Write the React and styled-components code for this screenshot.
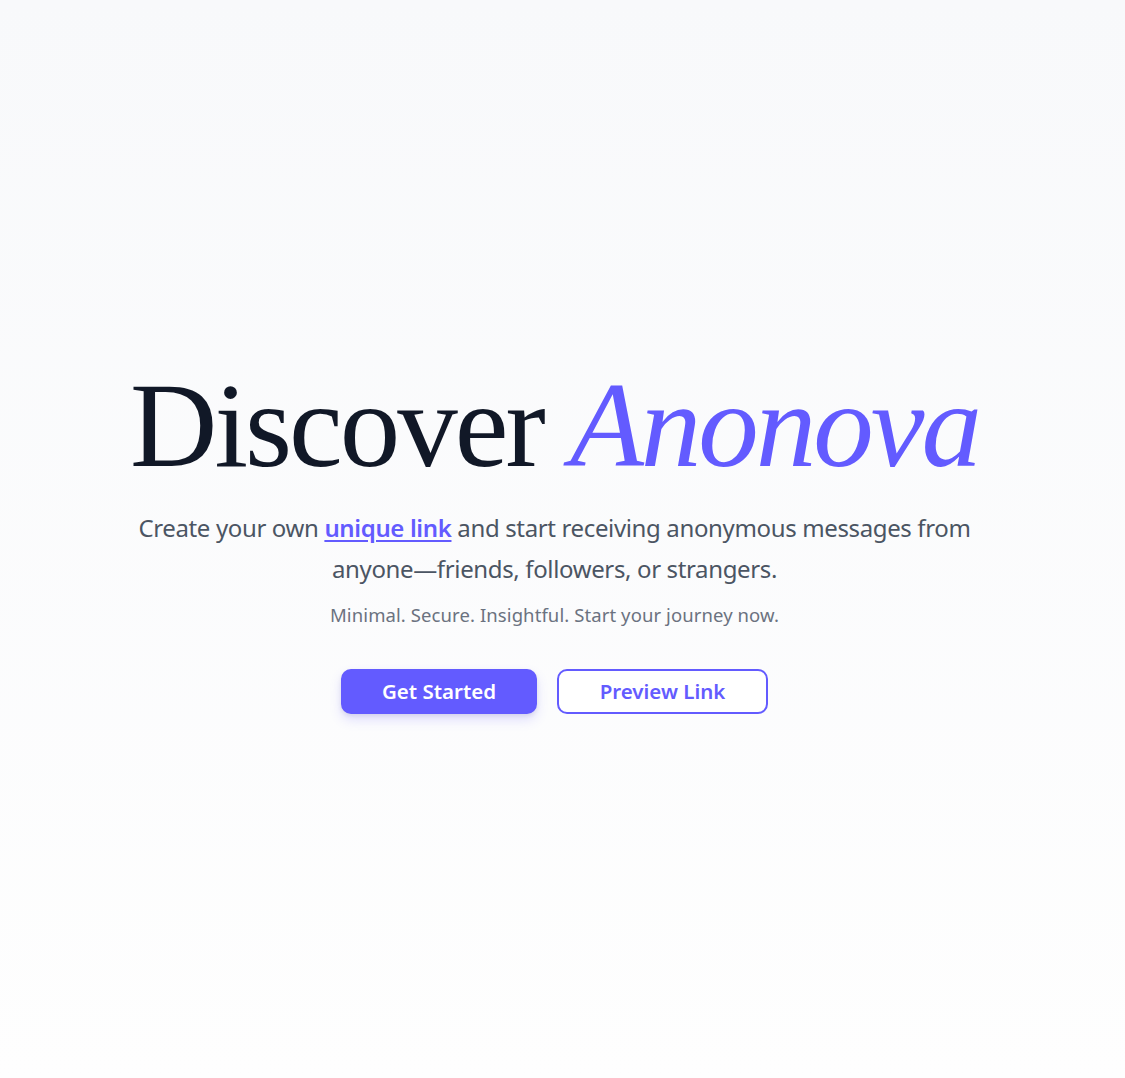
import React from "react";
import styled, { createGlobalStyle } from "styled-components";

const GlobalStyle = createGlobalStyle`
  * { box-sizing: border-box; }
  body {
    margin: 0;
    font-family: "Noto Sans", "Liberation Sans", sans-serif;
    background: #ffffff;
  }
`;

const Page = styled.main`
  min-height: 100vh;
  display: flex;
  flex-direction: column;
  align-items: center;
  justify-content: center;
  text-align: center;
  padding: 0 40px 0 24px;
  background: linear-gradient(180deg, #f8f9fb 0%, #fefefe 100%);
`;

const Heading = styled.h1`
  margin: 0;
  font-family: "Liberation Serif", "Times New Roman", serif;
  font-weight: 400;
  font-size: 121px;
  line-height: 1;
  letter-spacing: -0.025em;
  color: #111827;

  em {
    font-style: italic;
    color: #635bff;
  }
`;

const Lead = styled.p`
  margin: 21px 0 0;
  max-width: 880px;
  font-size: 24px;
  line-height: 41px;
  color: #4b5563;
  letter-spacing: -0.015em;

  a {
    color: #635bff;
    font-weight: 600;
    text-decoration: underline;
    text-underline-offset: 3px;
  }
`;

const Tagline = styled.p`
  margin: 12px 0 0;
  font-size: 18.5px;
  line-height: 28px;
  color: #6b7280;
  letter-spacing: 0.005em;
`;

const Actions = styled.div`
  margin-top: 40px;
  display: flex;
  gap: 20px;
`;

const Button = styled.button`
  height: 45px;
  padding: 0 ${(p) => (p.$outline ? "40px" : "38px")};
  min-width: ${(p) => (p.$outline ? "211px" : "196px")};
  border-radius: 10px;
  font-family: inherit;
  font-size: 20.5px;
  font-weight: 600;
  cursor: pointer;
  border: 2px solid #635bff;
  background: ${(p) => (p.$outline ? "#ffffff" : "#635bff")};
  color: ${(p) => (p.$outline ? "#635bff" : "#ffffff")};
  box-shadow: ${(p) => (p.$outline ? "none" : "0 6px 12px rgba(99, 91, 255, 0.18), 0 2px 4px rgba(0,0,0,0.08)")};
`;

export default function App() {
  return (
    <>
      <GlobalStyle />
      <Page>
        <Heading>
          Discover <em>Anonova</em>
        </Heading>
        <Lead>
          Create your own <a href="#">unique link</a> and start receiving anonymous messages from
          anyone—friends, followers, or strangers.
        </Lead>
        <Tagline>Minimal. Secure. Insightful. Start your journey now.</Tagline>
        <Actions>
          <Button>Get Started</Button>
          <Button $outline>Preview Link</Button>
        </Actions>
      </Page>
    </>
  );
}
